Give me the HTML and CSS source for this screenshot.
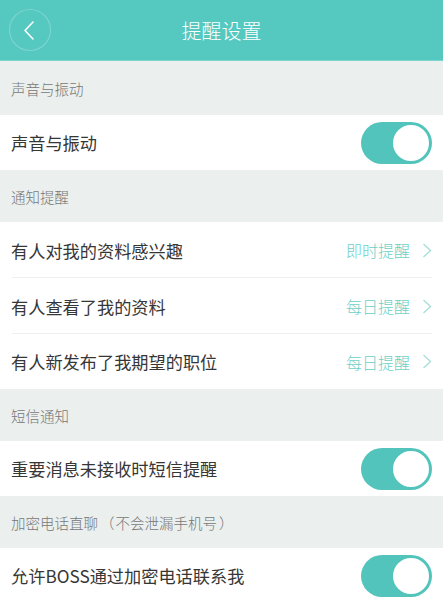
FILE: index.html
```html
<!DOCTYPE html>
<html lang="zh-CN">
<head>
  <meta charset="UTF-8">
  <meta name="viewport" content="width=device-width, initial-scale=1.0">
  <title>提醒设置</title>
  <link rel="stylesheet" href="styles.css">
</head>
<body>
  <!-- 顶部导航 -->
  <header class="top-bar">
    <div class="back-btn">
      <svg width="44" height="44" viewBox="0 0 44 44">
        <circle cx="22" cy="22" r="20.5" fill="none" stroke="rgba(255,255,255,0.22)" stroke-width="1.2"/>
        <path d="M25 14 L17 22.5 L25 31" fill="none" stroke="#fff" stroke-width="1.6" stroke-linecap="round" stroke-linejoin="round"/>
      </svg>
    </div>
    <h1 class="title">提醒设置</h1>
  </header>

  <div class="group-title first">声音与振动</div>
  <div class="row">
    <span class="label">声音与振动</span>
    <span class="switch on"><span class="knob"></span></span>
  </div>

  <div class="group-title">通知提醒</div>
  <div class="row line">
    <span class="label">有人对我的资料感兴趣</span>
    <span class="value">即时提醒<svg class="arrow" width="10" height="15" viewBox="0 0 10 15"><path d="M1.5 1 L8.5 7.5 L1.5 14" fill="none" stroke="#a9dfdb" stroke-width="1.4"/></svg></span>
  </div>
  <div class="row line">
    <span class="label">有人查看了我的资料</span>
    <span class="value">每日提醒<svg class="arrow" width="10" height="15" viewBox="0 0 10 15"><path d="M1.5 1 L8.5 7.5 L1.5 14" fill="none" stroke="#a9dfdb" stroke-width="1.4"/></svg></span>
  </div>
  <div class="row">
    <span class="label">有人新发布了我期望的职位</span>
    <span class="value">每日提醒<svg class="arrow" width="10" height="15" viewBox="0 0 10 15"><path d="M1.5 1 L8.5 7.5 L1.5 14" fill="none" stroke="#a9dfdb" stroke-width="1.4"/></svg></span>
  </div>

  <div class="group-title">短信通知</div>
  <div class="row">
    <span class="label">重要消息未接收时短信提醒</span>
    <span class="switch on"><span class="knob"></span></span>
  </div>

  <div class="group-title">加密电话直聊<span class="paren">（</span>不会泄漏手机号<span class="paren">）</span></div>
  <div class="row">
    <span class="label">允许BOSS通过加密电话联系我</span>
    <span class="switch on"><span class="knob"></span></span>
  </div>
</body>
</html>
```

FILE: styles.css
```css
/* General */
body {
  margin: 0;
  background-color: #ebefee;
  font-family: "Noto Sans CJK SC", "Noto Sans", sans-serif;
  font-weight: 300;
  color: #333;
}

/* Top bar */
.top-bar {
  height: 60px;
  background-color: #55c8c0;
  border-bottom: 1px solid #7fd6d0;
  display: flex;
  align-items: center;
  justify-content: center;
  position: relative;
}

.back-btn {
  position: absolute;
  left: 8px;
  top: 8px;
  width: 44px;
  height: 44px;
}

.title {
  margin: 0;
  font-size: 20px;
  font-weight: 300;
  color: #fff;
}

/* Group header */
.group-title {
  height: 52px;
  padding-left: 11px;
  display: flex;
  align-items: center;
  font-size: 14.5px;
  color: #777;
}

.group-title.first {
  height: 54px;
}

.paren {
  margin: 0 1px 0 2px;
}

/* Rows */
.row {
  height: 55px;
  background-color: #fff;
  display: flex;
  align-items: center;
  justify-content: space-between;
  padding: 0 11px 0 11px;
  position: relative;
}

.row.line {
  height: 56px;
}

.row.line::after {
  content: "";
  position: absolute;
  left: 12px;
  right: 11px;
  bottom: 0;
  height: 1px;
  background-color: #eef0f0;
}

.label {
  font-size: 17.2px;
  font-weight: 400;
  color: #363636;
}

.value {
  font-size: 16px;
  color: #6ccfc7;
  display: flex;
  align-items: center;
}

.arrow {
  margin-left: 12px;
}

/* Switch */
.switch {
  width: 71px;
  height: 42px;
  border-radius: 21px;
  background-color: #52c4bb;
  display: flex;
  align-items: center;
  justify-content: flex-end;
  box-sizing: border-box;
  padding-right: 1px;
}

.knob {
  width: 40px;
  height: 40px;
  border-radius: 50%;
  background-color: #fff;
  box-sizing: border-box;
  border: 2px solid #52c4bb;
}
```
